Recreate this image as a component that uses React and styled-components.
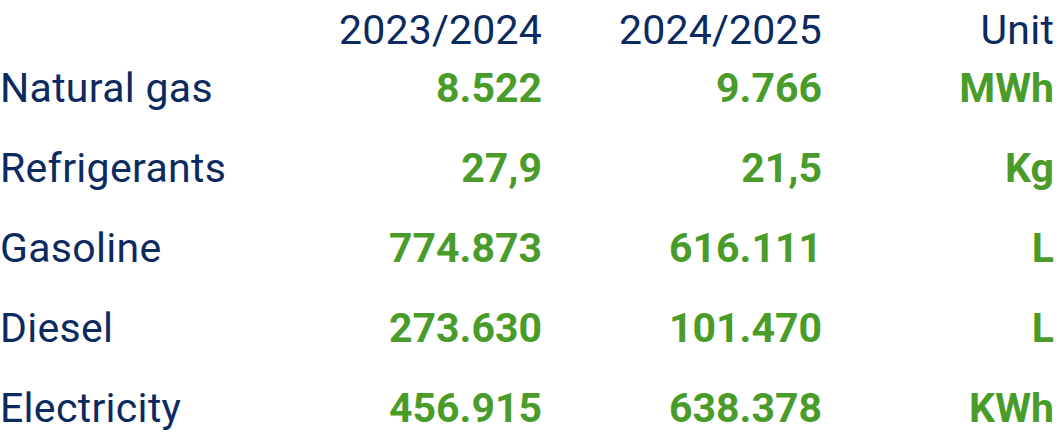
import React from "react";
import styled, { createGlobalStyle } from "styled-components";

const GlobalStyle = createGlobalStyle`
  body {
    margin: 0;
    background: #ffffff;
    font-family: Roboto, "Liberation Sans", sans-serif;
  }
`;

const rows = [
  { name: "Natural gas", a: "8.522", b: "9.766", unit: "MWh" },
  { name: "Refrigerants", a: "27,9", b: "21,5", unit: "Kg" },
  { name: "Gasoline", a: "774.873", b: "616.111", unit: "L" },
  { name: "Diesel", a: "273.630", b: "101.470", unit: "L" },
  { name: "Electricity", a: "456.915", b: "638.378", unit: "KWh" },
];

function App() {
  return (
    <>
      <GlobalStyle />
      <Table>
        <HeadRow>
          <Cell />
          <HeadCell>2023/2024</HeadCell>
          <HeadCell>2024/2025</HeadCell>
          <HeadCell>Unit</HeadCell>
        </HeadRow>
        {rows.map((r) => (
          <Row key={r.name}>
            <Label>{r.name}</Label>
            <Value>{r.a}</Value>
            <Value>{r.b}</Value>
            <Value>{r.unit}</Value>
          </Row>
        ))}
      </Table>
    </>
  );
}

export default App;

const Table = styled.div`
  width: 1054px;
`;

const Row = styled.div`
  display: grid;
  grid-template-columns: 262px 280px 280px 232px;
  height: 80px;
  align-items: center;
`;

const HeadRow = styled(Row)`
  height: 60px;
  margin-bottom: -12px;
`;

const Cell = styled.div`
  font-size: 41px;
  line-height: 1;
  white-space: nowrap;
`;

const HeadCell = styled(Cell)`
  color: #0b2a5f;
  text-align: right;
  letter-spacing: 0.2px;
`;

const Label = styled(Cell)`
  color: #0b2a5f;
  letter-spacing: 0.3px;
`;

const Value = styled(Cell)`
  color: #4a9c2a;
  font-weight: 700;
  text-align: right;
`;
